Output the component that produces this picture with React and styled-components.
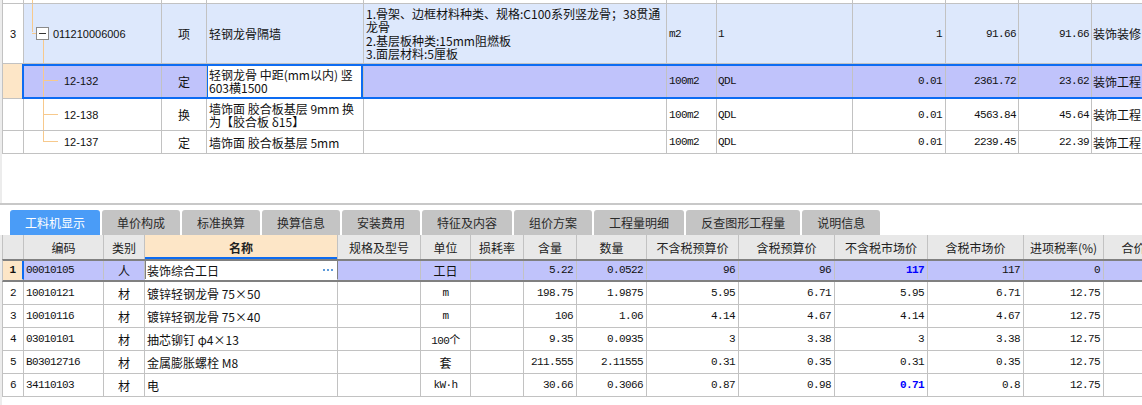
import React from "react";
import styled, { createGlobalStyle, css } from "styled-components";

const GlobalStyle = createGlobalStyle`
  html, body { margin: 0; padding: 0; background: #fff; }
  body {
    font-family: "Noto Sans CJK SC", "Liberation Sans", sans-serif;
    font-size: 12px;
    color: #111;
  }
`;

const TOP_COLS = "21px 138px 45px 157px 303px 50px 136px 93px 73px 73px 100px";
const BOT_COLS = "21px 80px 41px 193px 83px 50px 53px 53px 70px 92px 96px 93px 96px 80px 60px";

const LINE = "#c2c2c2";
const BLUE = "#0d6cf2";
const PEACH = "#fde6c7";
const LAVENDER = "#c0c3fb";
const TREE = "#f7c98c";

const fonts = {
  cjk: css`
    font-family: "Noto Sans CJK SC", sans-serif;
    font-size: 12px;
  `,
  mono: css`
    font-family: "Liberation Mono", "Noto Sans CJK SC", monospace;
    font-size: 11px;
    letter-spacing: -0.6px;
  `,
  code: css`
    font-family: "Liberation Sans", sans-serif;
    font-size: 11px;
  `,
};

const Page = styled.div`
  width: 1142px;
  height: 405px;
  overflow: hidden;
  display: flex;
  flex-direction: column;
  background: #fff;
`;

/* ---------- upper grid ---------- */

const TopPane = styled.div`
  flex: none;
  height: 203px;
  overflow: hidden;
  border-left: 2px solid #ececec;
  box-sizing: border-box;
`;

const TopRow = styled.div`
  display: grid;
  grid-template-columns: ${TOP_COLS};
  height: ${(p) => p.$h}px;
  background: ${(p) => p.$bg || "#fff"};
  border-left: 1px solid ${LINE};
  position: relative;

  ${(p) =>
    p.$selected &&
    css`
      &::after {
        content: "";
        position: absolute;
        left: 19px;
        right: -6px;
        top: 0;
        bottom: 0;
        border: 2px solid ${BLUE};
        pointer-events: none;
      }
    `}
`;

const Cell = styled.div`
  box-sizing: border-box;
  border-right: 1px solid ${LINE};
  border-bottom: 1px solid ${(p) => p.$noBottom ? "transparent" : LINE};
  display: flex;
  align-items: center;
  justify-content: ${(p) =>
    p.$align === "right" ? "flex-end" : p.$align === "center" ? "center" : "flex-start"};
  padding: 0 ${(p) => (p.$pad != null ? p.$pad : 3)}px;
  white-space: nowrap;
  overflow: hidden;
  position: relative;
  background: ${(p) => p.$bg || "transparent"};
  ${(p) => fonts[p.$font || "cjk"]}
`;

const NameCell = styled(Cell)`
  &::before {
    content: "";
    position: absolute;
    left: -1px;
    right: 0;
    top: 0;
    bottom: 0;
    border-left: 2px solid ${BLUE};
    border-right: 2px solid ${BLUE};
  }
`;

const Lines = styled.div`
  display: flex;
  flex-direction: column;
  line-height: ${(p) => p.$lh || 13}px;
`;

const TreeLine = styled.span`
  position: absolute;
  background: ${TREE};
  left: ${(p) => p.$x}px;
  ${(p) =>
    p.$dir === "v"
      ? css`
          width: 1px;
          top: ${p.$top};
          bottom: ${p.$bottom};
        `
      : css`
          height: 1px;
          top: ${p.$top};
          width: ${p.$w}px;
        `}
`;

const ToggleBox = styled.span`
  position: absolute;
  left: 12px;
  top: 23px;
  width: 13px;
  height: 13px;
  box-sizing: border-box;
  border: 1px solid #8a8a8a;
  background: #fff;
  &::after {
    content: "";
    position: absolute;
    left: 2px;
    right: 2px;
    top: 5px;
    height: 1px;
    background: #333;
  }
`;

const CodeText = styled.span`
  padding-left: ${(p) => p.$indent}px;
`;

function Tree({ kind }) {
  if (kind === "prev") return <TreeLine $dir="v" $x={8} $top="0" $bottom="0" />;
  if (kind === "parent")
    return (
      <>
        <TreeLine $dir="v" $x={8} $top="0" $bottom="31px" />
        <TreeLine $dir="h" $x={8} $top="29px" $w={5} />
        <ToggleBox />
        <TreeLine $dir="v" $x={19} $top="36px" $bottom="0" />
      </>
    );
  if (kind === "last")
    return (
      <>
        <TreeLine $dir="v" $x={19} $top="0" $bottom="50%" />
        <TreeLine $dir="h" $x={19} $top="calc(50% - 1px)" $w={15} />
      </>
    );
  return (
    <>
      <TreeLine $dir="v" $x={19} $top="0" $bottom="0" />
      <TreeLine $dir="h" $x={19} $top="calc(50% - 1px)" $w={15} />
    </>
  );
}

const topRows = [
  { tree: "prev", h: 4 },
  {
    num: "3",
    code: "011210006006",
    type: "项",
    name: ["轻钢龙骨隔墙"],
    desc: [
      "1.骨架、边框材料种类、规格:C100系列竖龙骨；38贯通",
      "龙骨",
      "2.基层板种类:15mm阻燃板",
      "3.面层材料:5厘板",
    ],
    unit: "m2",
    expr: "1",
    qty: "1",
    price: "91.66",
    total: "91.66",
    fee: "装饰装修",
    h: 60,
    bg: "#dde8fc",
    tree: "parent",
  },
  {
    code: "12-132",
    type: "定",
    name: ["轻钢龙骨 中距(mm以内) 竖", "603横1500"],
    unit: "100m2",
    expr: "QDL",
    qty: "0.01",
    price: "2361.72",
    total: "23.62",
    fee: "装饰工程",
    h: 35,
    bg: LAVENDER,
    selected: true,
    tree: "child",
  },
  {
    code: "12-138",
    type: "换",
    name: ["墙饰面 胶合板基层 9mm  换", "为【胶合板 δ15】"],
    unit: "100m2",
    expr: "QDL",
    qty: "0.01",
    price: "4563.84",
    total: "45.64",
    fee: "装饰工程",
    h: 32,
    tree: "child",
  },
  {
    code: "12-137",
    type: "定",
    name: ["墙饰面 胶合板基层 5mm"],
    unit: "100m2",
    expr: "QDL",
    qty: "0.01",
    price: "2239.45",
    total: "22.39",
    fee: "装饰工程",
    h: 23,
    tree: "last",
  },
];

function TopTable() {
  return (
    <TopPane>
      {topRows.map((r, i) => {
        const Name = r.selected ? NameCell : Cell;
        return (
          <TopRow key={i} $h={r.h} $bg={r.bg} $selected={r.selected}>
            <Cell $align="center" $font="code" $bg={r.selected ? PEACH : "#fff"}>
              {r.num}
            </Cell>
            <Cell $font="code" $pad={0}>
              <Tree kind={r.tree} />
              {r.code && (
                <CodeText $indent={r.tree === "parent" ? 29 : 40}>{r.code}</CodeText>
              )}
            </Cell>
            <Cell $align="center">{r.type}</Cell>
            <Name $pad={2} $bg={r.selected ? "#fff" : undefined}>
              {r.name && (
                <Lines>
                  {r.name.map((t, k) => (
                    <span key={k}>{t}</span>
                  ))}
                </Lines>
              )}
            </Name>
            <Cell $pad={2}>
              {r.desc && (
                <Lines $lh={13.5}>
                  {r.desc.map((t, k) => (
                    <span key={k}>{t}</span>
                  ))}
                </Lines>
              )}
            </Cell>
            <Cell $font="mono" $pad={2}>{r.unit}</Cell>
            <Cell $font="mono" $pad={1}>{r.expr}</Cell>
            <Cell $font="mono" $align="right">{r.qty}</Cell>
            <Cell $font="mono" $align="right" $pad={2}>{r.price}</Cell>
            <Cell $font="mono" $align="right" $pad={2}>{r.total}</Cell>
            <Cell $pad={1}>{r.fee}</Cell>
          </TopRow>
        );
      })}
    </TopPane>
  );
}

/* ---------- tabs ---------- */

const Divider = styled.div`
  flex: none;
  height: 2px;
  background: #c8c8c8;
`;

const TabBar = styled.div`
  flex: none;
  height: 30px;
  display: flex;
  align-items: flex-end;
  gap: 2px;
  padding-left: 10px;
  background: #fff;
`;

const Tab = styled.div`
  height: 25px;
  line-height: 25px;
  padding: 0 15px;
  border-radius: 3px 3px 0 0;
  white-space: nowrap;
  font-family: "Noto Sans CJK SC", sans-serif;
  font-size: 12px;
  background: ${(p) => (p.$active ? "#4a9cf7" : "#c4c4c4")};
  color: ${(p) => (p.$active ? "#fff" : "#2a2a2a")};
`;

const tabs = [
  "工料机显示",
  "单价构成",
  "标准换算",
  "换算信息",
  "安装费用",
  "特征及内容",
  "组价方案",
  "工程量明细",
  "反查图形工程量",
  "说明信息",
];

/* ---------- lower grid ---------- */

const BottomPane = styled.div`
  flex: 1;
  overflow: hidden;
  border-left: 2px solid #ececec;
`;

const HeadRow = styled.div`
  display: grid;
  grid-template-columns: ${BOT_COLS};
  height: 24px;
  background: #e8e8e8;
  border-left: 1px solid ${LINE};
`;

const HeadCell = styled.div`
  box-sizing: border-box;
  border-right: 1px solid ${LINE};
  display: flex;
  align-items: center;
  justify-content: center;
  white-space: nowrap;
  overflow: hidden;
  font-family: "Noto Sans CJK SC", sans-serif;
  font-size: 12px;
  color: #222;
  ${(p) =>
    p.$focus &&
    css`
      background: ${PEACH};
      font-weight: bold;
      box-shadow: inset 0 -2px 0 ${BLUE};
    `}
`;

const BodyRow = styled.div`
  display: grid;
  grid-template-columns: ${BOT_COLS};
  height: 23px;
  box-sizing: border-box;
  border-left: 1px solid ${LINE};
  background: ${(p) => (p.$selected ? LAVENDER : "#fff")};
  ${(p) =>
    p.$selected &&
    css`
      border-top: 2px solid #808080;
      border-bottom: 2px solid #808080;
    `}
`;

const NumCell = styled(Cell)`
  ${(p) =>
    p.$active &&
    css`
      background: ${PEACH};
      font-weight: bold;
      border-right: 2px solid ${BLUE};
    `}
`;

const EditCell = styled(Cell)`
  background: #fff;
  border-right-color: #808080;
  box-shadow: inset 1px 0 0 #808080;
  justify-content: space-between;
`;

const Dots = styled.span`
  display: flex;
  gap: 2px;
  margin-right: 2px;
  & > i {
    width: 2px;
    height: 2px;
    background: #5f9bda;
  }
`;

const Num = styled.span`
  ${(p) =>
    p.$hl &&
    css`
      color: #0000ff;
      font-weight: bold;
    `}
`;

const heads = [
  "",
  "编码",
  "类别",
  "名称",
  "规格及型号",
  "单位",
  "损耗率",
  "含量",
  "数量",
  "不含税预算价",
  "含税预算价",
  "不含税市场价",
  "含税市场价",
  "进项税率(%)",
  "合价",
];

const items = [
  { n: "1", code: "00010105", cat: "人", name: "装饰综合工日", unit: "工日", v: ["5.22", "0.0522", "96", "96", "117", "117", "0"], hl: true },
  { n: "2", code: "10010121", cat: "材", name: "镀锌轻钢龙骨 75×50", unit: "m", v: ["198.75", "1.9875", "5.95", "6.71", "5.95", "6.71", "12.75"] },
  { n: "3", code: "10010116", cat: "材", name: "镀锌轻钢龙骨 75×40", unit: "m", v: ["106", "1.06", "4.14", "4.67", "4.14", "4.67", "12.75"] },
  { n: "4", code: "03010101", cat: "材", name: "抽芯铆钉 φ4×13", unit: "100个", v: ["9.35", "0.0935", "3", "3.38", "3", "3.38", "12.75"] },
  { n: "5", code: "B03012716", cat: "材", name: "金属膨胀螺栓 M8", unit: "套", v: ["211.555", "2.11555", "0.31", "0.35", "0.31", "0.35", "12.75"] },
  { n: "6", code: "34110103", cat: "材", name: "电", unit: "kW·h", v: ["30.66", "0.3066", "0.87", "0.98", "0.71", "0.8", "12.75"], hl: true },
];

function BottomTable() {
  return (
    <BottomPane>
      <HeadRow>
        {heads.map((h, i) => (
          <HeadCell key={i} $focus={h === "名称"}>
            {h}
          </HeadCell>
        ))}
      </HeadRow>
      {items.map((r, i) => {
        const sel = i === 0;
        const Name = sel ? EditCell : Cell;
        const cjkUnit = /[\u4e00-\u9fff]/.test(r.unit) && r.unit.length <= 2 && !/\d/.test(r.unit);
        return (
          <BodyRow key={r.n} $selected={sel}>
            <NumCell $font="mono" $align="center" $active={sel} $noBottom={sel}>
              {r.n}
            </NumCell>
            <Cell $font="mono" $pad={2} $noBottom={sel}>{r.code}</Cell>
            <Cell $align="center" $noBottom={sel}>{r.cat}</Cell>
            <Name $pad={2} $noBottom={sel}>
              <span>{r.name}</span>
              {sel && (
                <Dots>
                  <i />
                  <i />
                  <i />
                </Dots>
              )}
            </Name>
            <Cell $noBottom={sel} />
            <Cell $font={cjkUnit ? "cjk" : "mono"} $align="center" $noBottom={sel}>
              {r.unit}
            </Cell>
            <Cell $noBottom={sel} />
            {r.v.map((val, k) => (
              <Cell key={k} $font="mono" $align="right" $noBottom={sel}>
                <Num $hl={r.hl && k === 4}>{val}</Num>
              </Cell>
            ))}
            <Cell $noBottom={sel} />
          </BodyRow>
        );
      })}
    </BottomPane>
  );
}

export default function App() {
  return (
    <>
      <GlobalStyle />
      <Page>
        <TopTable />
        <Divider />
        <TabBar>
          {tabs.map((t, i) => (
            <Tab key={t} $active={i === 0}>
              {t}
            </Tab>
          ))}
        </TabBar>
        <BottomTable />
      </Page>
    </>
  );
}
